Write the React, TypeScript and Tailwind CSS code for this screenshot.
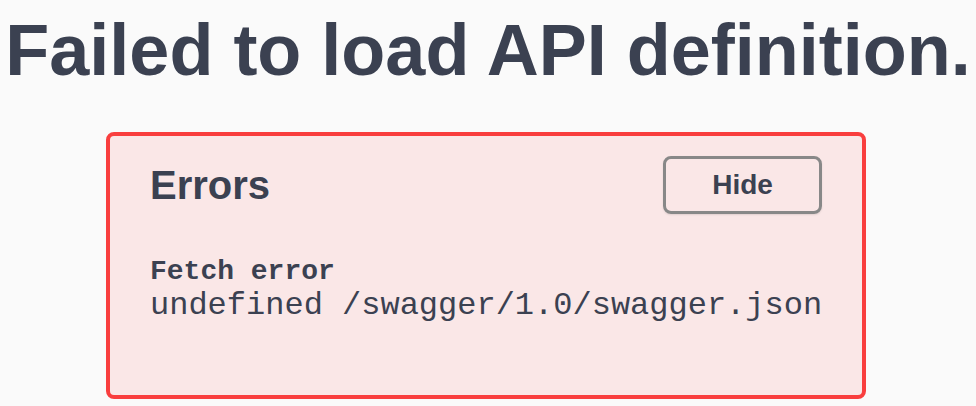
export default function App() {
    return (
        <div className="min-h-[406px] bg-[#fafafa] text-[#3b4151] font-['Liberation_Sans',Arial,sans-serif]">
            <h1 className="pt-[14px] text-center text-[72px] leading-[72px] font-bold whitespace-nowrap">
                Failed to load API definition.
            </h1>

            <div className="mt-[46px] ml-[106px] w-[760px] h-[267px] rounded-[8px] border-4 border-[#f93e3e] bg-[#fae7e7] px-10 pt-5">
                <div className="flex items-center justify-between h-[58px]">
                    <h4 className="text-[40px] leading-[40px] font-bold">Errors</h4>
                    <button className="w-[159px] h-[58px] rounded-[8px] border-[3px] border-[#888888] bg-transparent text-[28px] font-bold shadow-[0_1px_2px_rgba(0,0,0,0.1)]">
                        Hide
                    </button>
                </div>

                <div className="mt-[42px] font-['Liberation_Mono','Courier_New',monospace]">
                    <h4 className="text-[28px] leading-[32px] font-bold">Fetch error</h4>
                    <span className="block whitespace-nowrap text-[32px] leading-[36px]">undefined /swagger/1.0/swagger.json</span>
                </div>
            </div>
        </div>
    )
}
